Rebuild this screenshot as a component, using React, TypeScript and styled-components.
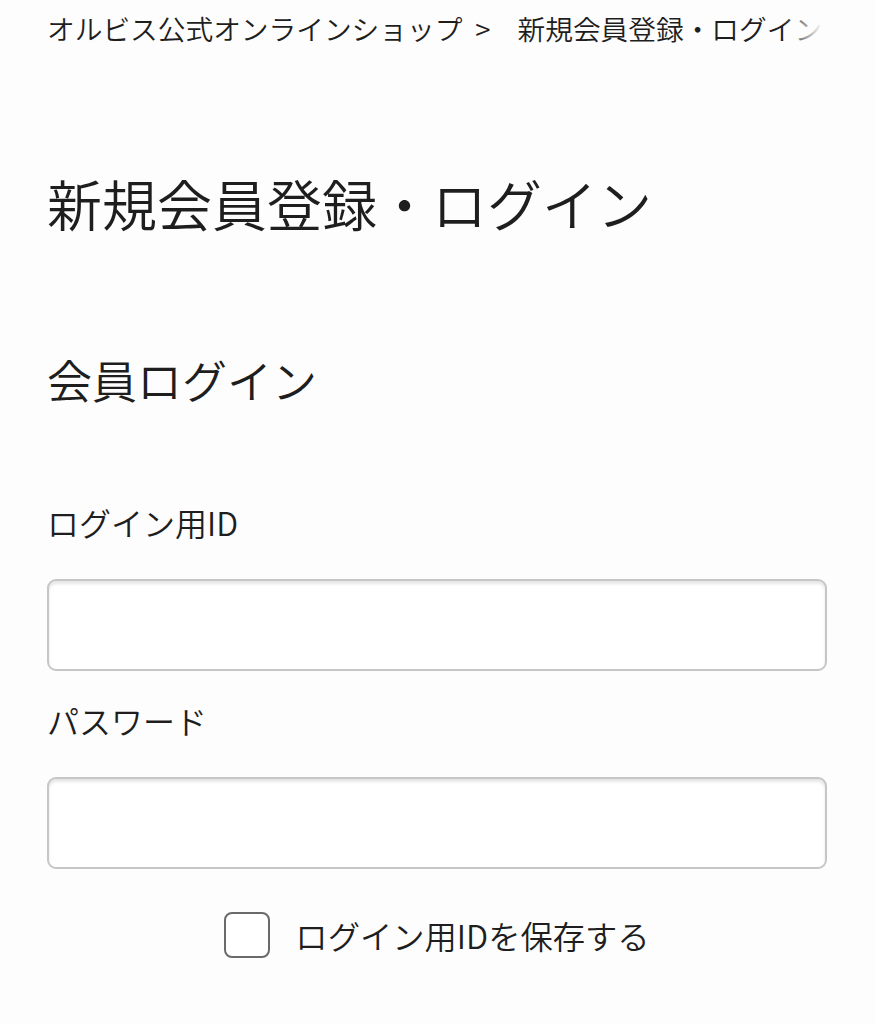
import styled, { createGlobalStyle } from "styled-components";

const GlobalStyle = createGlobalStyle`
    html, body {
        margin: 0;
        padding: 0;
        background: #fdfdfd;
    }
    body {
        font-family: "Noto Sans CJK JP", "Noto Sans", sans-serif;
        font-weight: 350;
        color: #1e1e1e;
    }
`;

const Page = styled.div`
    padding: 0 48px 0 47px;
`;

const Breadcrumb = styled.nav`
    position: relative;
    height: 56px;
    line-height: 56px;
    font-size: 27.7px;
    white-space: nowrap;
    overflow: hidden;
    &::after {
        content: "";
        position: absolute;
        top: 0;
        right: 0;
        width: 44px;
        height: 100%;
        background: linear-gradient(to right, rgba(253, 253, 253, 0), #fdfdfd 90%);
    }
`;

const Crumb = styled.span`
    display: inline-block;
`;

const Separator = styled.span`
    display: inline-block;
    margin: 0 27px 0 13px;
`;

const PageTitle = styled.h1`
    margin: 107px 0 0;
    font-size: 55px;
    line-height: 78px;
    font-weight: 350;
`;

const SectionTitle = styled.h2`
    margin: 107px 0 0;
    font-size: 45px;
    line-height: 64px;
    font-weight: 350;
`;

const Form = styled.form`
    margin-top: 87px;
    display: flex;
    flex-direction: column;
`;

const Label = styled.label`
    display: block;
    font-size: 32px;
    line-height: 46px;
    margin-bottom: 34px;
`;

const TextInput = styled.input`
    box-sizing: border-box;
    width: 100%;
    height: 92px;
    margin: 0 0 26px;
    border: 2px solid #c6c6c6;
    border-radius: 9px;
    background: #fff;
    box-shadow: inset 0 3px 3px rgba(0, 0, 0, 0.1);
    font-size: 30px;
    padding: 0 20px;
    outline: none;
`;

const CheckRow = styled.label`
    margin-top: 17px;
    display: flex;
    align-items: center;
    justify-content: center;
    gap: 25px;
    font-size: 32.3px;
    line-height: 46px;
`;

const CheckBox = styled.input`
    appearance: none;
    margin: 0;
    width: 46px;
    height: 46px;
    box-sizing: border-box;
    border: 2px solid #6a6a6a;
    border-radius: 8px;
    background: #fff;
`;

export default function App() {
    return (
        <>
            <GlobalStyle />
            <Page>
                <Breadcrumb>
                    <Crumb>オルビス公式オンラインショップ</Crumb>
                    <Separator>&gt;</Separator>
                    <Crumb>新規会員登録・ログイン</Crumb>
                </Breadcrumb>
                <PageTitle>新規会員登録・ログイン</PageTitle>
                <SectionTitle>会員ログイン</SectionTitle>
                <Form>
                    <Label htmlFor="login-id">ログイン用ID</Label>
                    <TextInput id="login-id" type="text" />
                    <Label htmlFor="login-pass">パスワード</Label>
                    <TextInput id="login-pass" type="password" />
                    <CheckRow>
                        <CheckBox type="checkbox" />
                        ログイン用IDを保存する
                    </CheckRow>
                </Form>
            </Page>
        </>
    );
}
